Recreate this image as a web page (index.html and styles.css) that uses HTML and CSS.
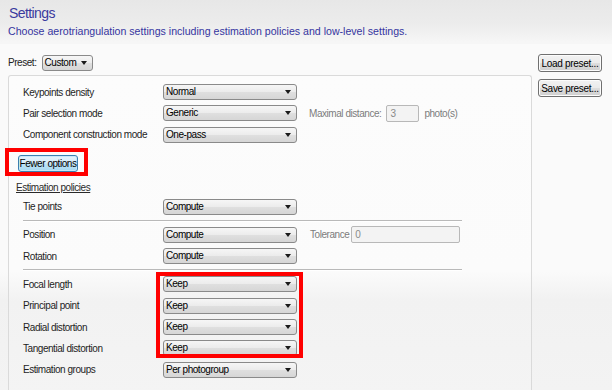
FILE: index.html
```html
<!doctype html>
<html lang="en">
<head>
  <meta charset="utf-8">
  <title>Settings</title>
  <link rel="stylesheet" href="styles.css">
</head>
<body>
  <div class="header">
    <h1 class="title">Settings</h1>
    <p class="subtitle">Choose aerotriangulation settings including estimation policies and low-level settings.</p>
  </div>
  <div class="main">
    <div class="left">
      <div class="preset-row">
        <span class="preset-label">Preset:</span>
        <div class="combo combo-preset">Custom</div>
      </div>
      <div class="panel">
        <div class="field">
          <span class="label">Keypoints density</span>
          <div class="combo">Normal</div>
        </div>
        <div class="field">
          <span class="label">Pair selection mode</span>
          <div class="combo">Generic</div>
          <span class="hint hint-distance">Maximal distance:</span>
          <div class="input input-distance">3</div>
          <span class="hint">photo(s)</span>
        </div>
        <div class="field">
          <span class="label">Component construction mode</span>
          <div class="combo">One-pass</div>
        </div>

        <div class="button-row">
          <button class="btn btn-focus">Fewer options</button>
          <div class="mark mark-button"></div>
        </div>

        <div class="section-title">Estimation policies</div>
        <div class="field">
          <span class="label">Tie points</span>
          <div class="combo">Compute</div>
        </div>
        <div class="separator"></div>
        <div class="field">
          <span class="label">Position</span>
          <div class="combo">Compute</div>
          <span class="hint hint-tolerance">Tolerance</span>
          <div class="input input-tolerance">0</div>
        </div>
        <div class="field">
          <span class="label">Rotation</span>
          <div class="combo">Compute</div>
        </div>
        <div class="separator"></div>
        <div class="keep-group">
          <div class="field">
            <span class="label">Focal length</span>
            <div class="combo">Keep</div>
          </div>
          <div class="field">
            <span class="label">Principal point</span>
            <div class="combo">Keep</div>
          </div>
          <div class="field">
            <span class="label">Radial distortion</span>
            <div class="combo">Keep</div>
          </div>
          <div class="field">
            <span class="label">Tangential distortion</span>
            <div class="combo">Keep</div>
          </div>
          <div class="mark mark-keep"></div>
        </div>
        <div class="field">
          <span class="label">Estimation groups</span>
          <div class="combo">Per photogroup</div>
        </div>
      </div>
    </div>
    <div class="side">
      <button class="btn">Load preset...</button>
      <button class="btn">Save preset...</button>
    </div>
  </div>
</body>
</html>
```

FILE: styles.css
```css
html, body {
  height: 100%;
}
body {
  margin: 0;
  font-family: 'Liberation Sans', Arial, sans-serif;
  font-size: 10px;
  letter-spacing: -0.45px;
  color: #1e1e1e;
  background: linear-gradient(to bottom, #fafafa 0, #fafafa 272px, #f1f1f1 300px, #f3f3f3 390px);
  overflow: hidden;
}
.header {
  background: linear-gradient(to bottom, #e7e7e7 0, #ececec 24px, #f6f6f6 42px);
  padding: 4px 8px 4px 9px;
  height: 36px;
}
.title {
  margin: 0;
  font-size: 14px;
  font-weight: normal;
  color: #3a3a9e;
  line-height: 18px;
  letter-spacing: -0.6px;
}
.subtitle {
  margin: 2px 0 0 -1px;
  font-size: 10.6px;
  letter-spacing: 0;
  color: #3535a0;
  line-height: 15px;
}
.main {
  display: flex;
  padding: 10px 0 0 8px;
  gap: 6px;
}
.left {
  width: 524px;
}
.preset-row {
  display: flex;
  align-items: center;
  gap: 5px;
  height: 15px;
  margin-top: 1px;
}
.preset-label {
  color: #222;
}
.panel {
  margin-top: 5px;
  border: 1px solid #dadada;
  border-bottom: none;
  border-radius: 3px 3px 0 0;
  padding: 8px 0 20px 14px;
  background: linear-gradient(to bottom, #fcfcfc 0, #fbfbfb 195px, #f2f2f2 225px, #f4f4f4 320px);
}
.field {
  display: flex;
  align-items: center;
  height: 16px;
  margin-bottom: 5.3px;
  white-space: nowrap;
}
.label {
  width: 140px;
  flex: none;
  color: #1e1e1e;
}
.combo {
  position: relative;
  box-sizing: border-box;
  width: 134px;
  height: 16px;
  line-height: 14px;
  padding-left: 2px;
  border: 1px solid #8a8a8a;
  border-radius: 3px;
  background: linear-gradient(to bottom, #f6f6f6 0, #ececec 48%, #dfdfdf 52%, #d6d6d6 100%);
  color: #000;
  white-space: nowrap;
}
.combo::after {
  content: '';
  position: absolute;
  right: 5px;
  top: 5px;
  border-left: 3.5px solid transparent;
  border-right: 3.5px solid transparent;
  border-top: 4px solid #1a1a1a;
}
.combo-preset {
  width: 51px;
  height: 16px;
}
.hint {
  color: #7c7c7c;
}
.hint-distance {
  margin-left: 12px;
}
.hint-tolerance {
  margin-left: 13px;
}
.input {
  box-sizing: border-box;
  height: 17px;
  line-height: 15px;
  padding-left: 3px;
  border: 1px solid #b8b8b8;
  border-radius: 2px;
  background: #f3f3f3;
  color: #8a8a8a;
}
.input-distance {
  width: 33px;
  margin: 0 5px 0 5px;
}
.input-tolerance {
  width: 109px;
  margin-left: 2px;
}
.btn {
  box-sizing: border-box;
  font-family: inherit;
  font-size: 10px;
  letter-spacing: -0.3px;
  color: #000;
  height: 18px;
  padding: 0 2px;
  white-space: nowrap;
  border: 1px solid #707070;
  border-radius: 3px;
  background: linear-gradient(to bottom, #f2f2f2 0, #ebebeb 48%, #dddddd 52%, #cfcfcf 100%);
  box-shadow: inset 0 0 0 1px #fcfcfc;
}
.btn-focus {
  height: 17px;
  width: 60px;
  padding: 0;
  letter-spacing: -0.45px;
  border-color: #3c7fb1;
  background: linear-gradient(to bottom, #e6f4fc 0, #d4ebf9 48%, #bde3f6 52%, #a8d8f1 100%);
  box-shadow: inset 0 0 0 1px #c7e8f8;
}
.button-row {
  position: relative;
  margin: 12px 0 0 -5px;
  height: 17px;
}
.mark {
  position: absolute;
  border: 4px solid #ff0000;
  pointer-events: none;
}
.mark-button {
  left: -13px;
  top: -7px;
  width: 75px;
  height: 20px;
}
.section-title {
  margin: 9px 0 5px -7px;
  text-decoration: underline;
  color: #2a2a2a;
  line-height: 13px;
}
.separator {
  width: 439px;
  height: 1px;
  background: #b9b9b9;
  box-shadow: 0 1px 0 #ffffff;
  margin: 0 0 6px 0;
}
.keep-group {
  position: relative;
  margin-top: 2px;
}
.mark-keep {
  left: 133px;
  top: -4px;
  width: 139px;
  height: 78px;
}
.side {
  display: flex;
  flex-direction: column;
  gap: 7px;
}
.side .btn {
  width: 64px;
  padding: 0;
  text-align: center;
}
```
